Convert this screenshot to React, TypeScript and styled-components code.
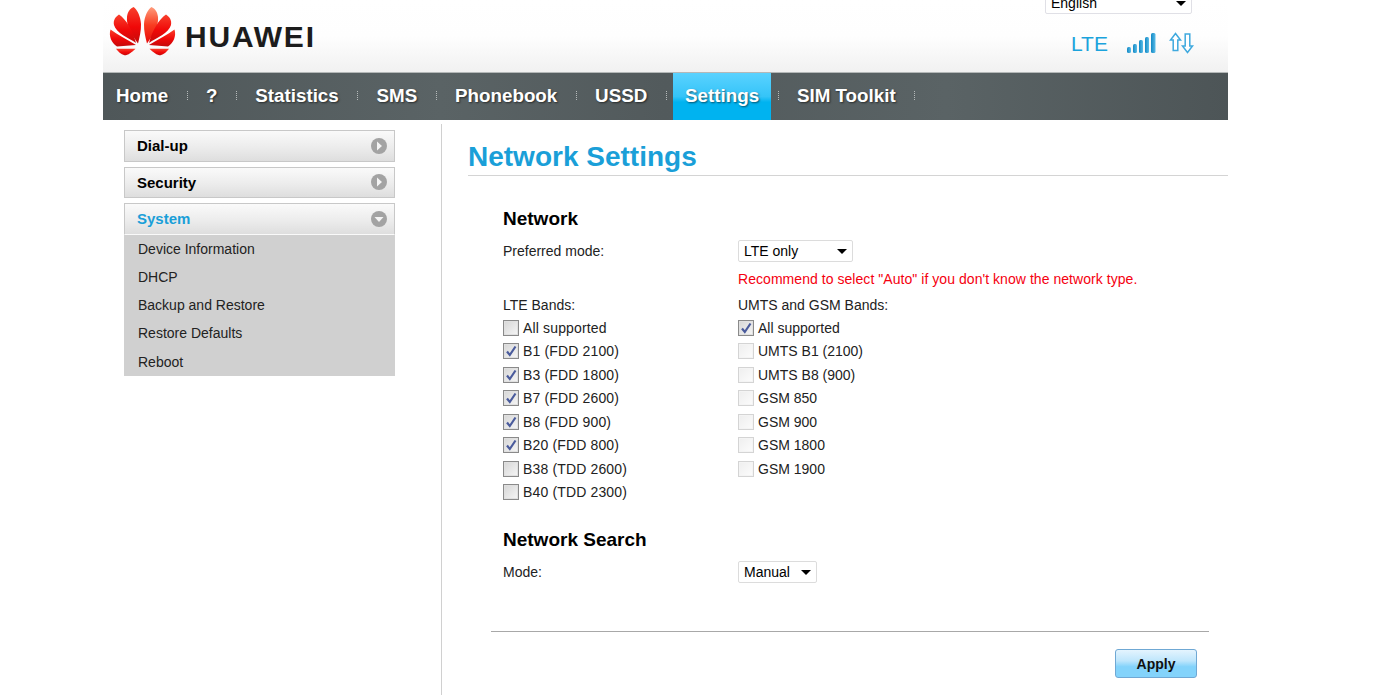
import React from 'react';
import styled, { createGlobalStyle } from 'styled-components';

const GlobalStyle = createGlobalStyle`
  html, body {
    margin: 0;
    height: 695px;
    overflow: hidden;
    background: #fff;
    font-family: "Liberation Sans", Arial, sans-serif;
    font-size: 14px;
    color: #222;
  }
`;

const Page = styled.div`
  width: 1125px;
  margin-left: 103px;
`;

const Header = styled.header`
  height: 72px;
  background: linear-gradient(to bottom, #fff 0%, #fefefe 50%, #f1f1f1 100%);
  display: flex;
  justify-content: space-between;
  overflow: hidden;
`;

const Logo = styled.div`
  display: flex;
  align-items: flex-start;
  padding: 2px 0 0 2px;
`;

const LogoText = styled.span`
  font-size: 30px;
  font-weight: bold;
  line-height: 33px;
  letter-spacing: 1.8px;
  color: #1c1c1c;
  margin: 18px 0 0 5px;
`;

const Status = styled.div`
  width: 183px;
  display: flex;
  flex-direction: column;
`;

const SelectBox = styled.div<{ $w: number }>`
  width: ${p => p.$w}px;
  height: 22px;
  box-sizing: border-box;
  border: 1px solid #dcdcdc;
  border-radius: 2px;
  background: #fff;
  color: #000;
  padding-left: 5px;
  display: flex;
  align-items: center;
  justify-content: space-between;
  flex: none;
`;

const Caret = styled.i`
  width: 0;
  height: 0;
  margin-right: 5px;
  border-left: 5px solid transparent;
  border-right: 5px solid transparent;
  border-top: 5px solid #000;
`;

const LangSelect = styled(SelectBox)`
  margin-top: -8px;
  border-color: #e0e0e6;
`;

const StatusRow = styled.div`
  display: flex;
  align-items: center;
  margin-top: 18px;
  margin-left: 26px;
`;

const LteLabel = styled.span`
  font-size: 21px;
  color: #1ba3dc;
  width: 55px;
`;

const IconSlot = styled.span<{ $left?: number }>`
  display: flex;
  margin: 0 0 2px ${p => p.$left ?? 0}px;
`;

const Nav = styled.nav`
  height: 48px;
  box-sizing: border-box;
  border-top: 1px solid #b4b8b8;
  padding: 0 0 2px 13px;
  display: flex;
  align-items: center;
  background: linear-gradient(to right, #4f5759 0%, #5a6365 30%, #525a5c 50%, #5a6365 75%, #4d5557 100%);
`;

const NavItem = styled.a<{ $active?: boolean }>`
  font-size: 18.8px;
  font-weight: bold;
  color: #fff;
  text-shadow: 1px 1px 2px rgba(0, 0, 0, 0.55);
  ${p => p.$active && `
    align-self: stretch;
    display: flex;
    align-items: center;
    padding: 0 12px 2px;
    margin: 0 -12px -2px;
    background: linear-gradient(to bottom, #5ad2ff 0%, #35c4f8 50%, #00b3f0 62%, #00b3f0 100%);
  `}
`;

const NavSep = styled.span`
  width: 0;
  height: 9px;
  border-left: 1px dotted #b5baba;
  margin: 0 18.4px;
`;

const Main = styled.main`
  display: flex;
  height: 575px;
`;

const Sidebar = styled.aside`
  width: 338px;
  border-right: 1px solid #d0d0d0;
  margin-top: 4px;
  padding-top: 6px;
`;

const SideList = styled.div`
  width: 271px;
  margin-left: 21px;
`;

const SideHead = styled.div<{ $open?: boolean }>`
  height: 31.5px;
  box-sizing: border-box;
  border: 1px solid #c8c8c8;
  ${p => p.$open && 'border-bottom-color: transparent;'}
  background: linear-gradient(to bottom, #fafafa 0%, #ececec 55%, #dedede 100%);
  display: flex;
  align-items: center;
  justify-content: space-between;
  padding: 0 7px 0 12px;
  margin-bottom: ${p => (p.$open ? 0 : 5)}px;
  font-size: 15px;
  font-weight: bold;
  color: ${p => (p.$open ? '#1a9fd8' : '#000')};
`;

const SubMenu = styled.div`
  background: #d0d0d0;
  padding-left: 14px;
`;

const SubItem = styled.div`
  height: 28.25px;
  line-height: 28.25px;
  color: #222;
`;

const Content = styled.section`
  flex: 1;
  padding-left: 26px;
`;

const TitleBar = styled.div`
  height: 56px;
  box-sizing: border-box;
  border-bottom: 1px solid #d4d4d4;
  padding-top: 20px;
`;

const Title = styled.h1`
  margin: 0;
  font-size: 28px;
  line-height: 34px;
  font-weight: bold;
  color: #1a9fd8;
`;

const Form = styled.div`
  padding-left: 35px;
`;

const SectionTitle = styled.h2<{ $top: number }>`
  margin: ${p => p.$top}px 0 9px;
  font-size: 19px;
  line-height: 24px;
  font-weight: bold;
  color: #000;
`;

const Row = styled.div`
  display: grid;
  grid-template-columns: 235px 1fr;
  align-items: center;
`;

const Notice = styled.div`
  margin: 7px 0 6px 235px;
  line-height: 20px;
  letter-spacing: 0.05px;
  color: #f5000f;
`;

const BandLabel = styled.div`
  line-height: 20px;
  height: 21px;
`;

const BandColumn = styled.div<{ $ls?: number }>`
  align-self: start;
  letter-spacing: ${p => p.$ls ?? 0}px;
`;

const CheckRow = styled.label`
  height: 23.5px;
  display: flex;
  align-items: center;
  gap: 4px;
`;

const CheckBox = styled.span<{ $off?: boolean }>`
  width: 16px;
  height: 16px;
  flex: none;
  box-sizing: border-box;
  border: 1px solid ${p => (p.$off ? '#d4d4d4' : '#8a8a8a')};
  box-shadow: inset 0 0 0 1px ${p => (p.$off ? '#f4f4f4' : '#e0e0e0')};
  background: ${p => (p.$off
    ? 'linear-gradient(135deg, #eee 0%, #fcfcfc 100%)'
    : 'linear-gradient(135deg, #d6d6d6 0%, #f6f6f6 100%)')};
  display: flex;
  align-items: center;
  justify-content: center;
`;

const Rule = styled.div`
  height: 1px;
  background: #a8a8a8;
  margin: 48px 19px 0 23px;
`;

const Actions = styled.div`
  display: flex;
  justify-content: flex-end;
  padding: 17px 31px 0 0;
`;

const ApplyButton = styled.button`
  width: 82px;
  height: 29px;
  box-sizing: border-box;
  border: 1px solid #6fa8d4;
  border-radius: 3px;
  background: linear-gradient(to bottom, #e4f4fe 0%, #bfe6fc 40%, #83d3fb 62%, #83d3fb 100%);
  font-family: inherit;
  font-size: 14px;
  font-weight: bold;
  color: #111;
  padding: 0;
`;

const HuaweiMark = () => (
  <svg width="75" height="58" viewBox="0 0 75 58">
    <defs>
      <linearGradient id="pl" x1="0" y1="0" x2="0" y2="1">
        <stop offset="0" stopColor="#f8402c" />
        <stop offset="0.55" stopColor="#f00808" />
        <stop offset="1" stopColor="#c40a0a" />
      </linearGradient>
      <linearGradient id="pt" x1="0" y1="0" x2="0" y2="1">
        <stop offset="0" stopColor="#ff9c7c" />
        <stop offset="0.5" stopColor="#f83c20" />
        <stop offset="1" stopColor="#e80808" />
      </linearGradient>
    </defs>
    <g fill="url(#pl)">
      <path d="M33 41.500C27 33 21 24 22 15C22.500 10 25 6.500 28.500 5C32 7 35.500 14 36 22C36.200 29 34.500 36 33 41.500Z" />
      <path d="M31 41C24 36 11 31 9 23C8 18 10.500 15 14 12.500C21 17 28 29 31 41Z" />
      <path d="M31 43C22 37.500 13 33 5.500 27.500C3.500 34 6.500 41 12 44.500Z" />
      <path d="M11 46.700L30.500 46.700C27 50 23 53.300 19.500 53.300C16 52.500 13 49.500 11 46.700Z" />
      <path d="M42 41.500C48 33 54 24 53 15C52.500 10 50 6.500 46.500 5C43 7 39.500 14 39 22C38.800 29 40.500 36 42 41.500Z" fill="url(#pt)" />
      <path d="M44 41C51 36 64 31 66 23C67 18 64.500 15 61 12.500C54 17 47 29 44 41Z" />
      <path d="M44 43C53 37.500 62 33 69.500 27.500C71.500 34 68.500 41 63 44.500Z" />
      <path d="M64 46.700L44.500 46.700C48 50 52 53.300 55.500 53.300C59 52.500 62 49.500 64 46.700Z" />
    </g>
  </svg>
);

const SignalIcon = () => (
  <svg width="31" height="22" viewBox="0 0 31 22">
    <defs>
      <linearGradient id="sig" x1="0" y1="0" x2="1" y2="0">
        <stop offset="0" stopColor="#1288c4" />
        <stop offset="1" stopColor="#5cbde8" />
      </linearGradient>
    </defs>
    <g fill="url(#sig)">
      <rect x="1" y="15" width="4" height="6" rx="1.5" />
      <rect x="7" y="12" width="4" height="9" rx="1.5" />
      <rect x="13" y="8" width="4" height="13" rx="1.5" />
      <rect x="19" y="5" width="4" height="16" rx="1.5" />
      <rect x="25" y="1" width="4.5" height="20" rx="1.5" />
    </g>
  </svg>
);

const ArrowsIcon = () => (
  <svg width="26" height="22" viewBox="0 0 26 22" fill="#fff" stroke="#3fa9de" strokeWidth="1.5">
    <path d="M6.500 1.500L11.500 8H8.800V18.500H4.200V8H1.500Z" />
    <path d="M18.500 20.500L23.500 14H20.800V2H16.200V14H13.500Z" />
  </svg>
);

const SideArrow = ({ down }: { down?: boolean }) => (
  <svg width="16" height="16" viewBox="0 0 16 16">
    <circle cx="8" cy="8" r="8" fill="#a3a3a3" />
    <path d={down ? 'M3.500 6H12.500L8 11Z' : 'M6 3.500L11 8L6 12.500Z'} fill="#f4f4f4" />
  </svg>
);

const CheckMark = () => (
  <svg width="12" height="12" viewBox="0 0 12 12">
    <path d="M2 6.500L4.800 10L10.500 1.500" fill="none" stroke="#4a5b9c" strokeWidth="2.2" />
  </svg>
);

const Check = ({ on, off, children }: { on?: boolean; off?: boolean; children: React.ReactNode }) => (
  <CheckRow>
    <CheckBox $off={off}>{on && <CheckMark />}</CheckBox>
    {children}
  </CheckRow>
);

const navItems: { label: string; active?: boolean }[] = [
  { label: 'Home' },
  { label: '?' },
  { label: 'Statistics' },
  { label: 'SMS' },
  { label: 'Phonebook' },
  { label: 'USSD' },
  { label: 'Settings', active: true },
  { label: 'SIM Toolkit' },
];

const lteBands = [
  'B1 (FDD 2100)',
  'B3 (FDD 1800)',
  'B7 (FDD 2600)',
  'B8 (FDD 900)',
  'B20 (FDD 800)',
];

const gsmBands = ['UMTS B1 (2100)', 'UMTS B8 (900)', 'GSM 850', 'GSM 900', 'GSM 1800', 'GSM 1900'];

const subItems = ['Device Information', 'DHCP', 'Backup and Restore', 'Restore Defaults', 'Reboot'];

export default function App() {
  return (
    <Page>
      <GlobalStyle />
      <Header>
        <Logo>
          <HuaweiMark />
          <LogoText>HUAWEI</LogoText>
        </Logo>
        <Status>
          <LangSelect $w={147}>
            English
            <Caret />
          </LangSelect>
          <StatusRow>
            <LteLabel>LTE</LteLabel>
            <IconSlot><SignalIcon /></IconSlot>
            <IconSlot $left={12}><ArrowsIcon /></IconSlot>
          </StatusRow>
        </Status>
      </Header>
      <Nav>
        {navItems.map(item => (
          <React.Fragment key={item.label}>
            <NavItem $active={item.active}>{item.label}</NavItem>
            <NavSep />
          </React.Fragment>
        ))}
      </Nav>
      <Main>
        <Sidebar>
          <SideList>
            <SideHead>Dial-up<SideArrow /></SideHead>
            <SideHead>Security<SideArrow /></SideHead>
            <SideHead $open>System<SideArrow down /></SideHead>
            <SubMenu>
              {subItems.map(s => <SubItem key={s}>{s}</SubItem>)}
            </SubMenu>
          </SideList>
        </Sidebar>
        <Content>
          <TitleBar>
            <Title>Network Settings</Title>
          </TitleBar>
          <Form>
            <SectionTitle $top={31}>Network</SectionTitle>
            <Row>
              <span>Preferred mode:</span>
              <SelectBox $w={115}>LTE only<Caret /></SelectBox>
            </Row>
            <Notice>Recommend to select "Auto" if you don't know the network type.</Notice>
            <Row>
              <BandLabel>LTE Bands:</BandLabel>
              <BandLabel>UMTS and GSM Bands:</BandLabel>
            </Row>
            <Row>
              <BandColumn $ls={0.15}>
                <Check>All supported</Check>
                {lteBands.map(b => <Check key={b} on>{b}</Check>)}
                <Check>B38 (TDD 2600)</Check>
                <Check>B40 (TDD 2300)</Check>
              </BandColumn>
              <BandColumn>
                <Check on>All supported</Check>
                {gsmBands.map(b => <Check key={b} off>{b}</Check>)}
              </BandColumn>
            </Row>
            <SectionTitle $top={24}>Network Search</SectionTitle>
            <Row>
              <span>Mode:</span>
              <SelectBox $w={79}>Manual<Caret /></SelectBox>
            </Row>
          </Form>
          <Rule />
          <Actions>
            <ApplyButton>Apply</ApplyButton>
          </Actions>
        </Content>
      </Main>
    </Page>
  );
}
